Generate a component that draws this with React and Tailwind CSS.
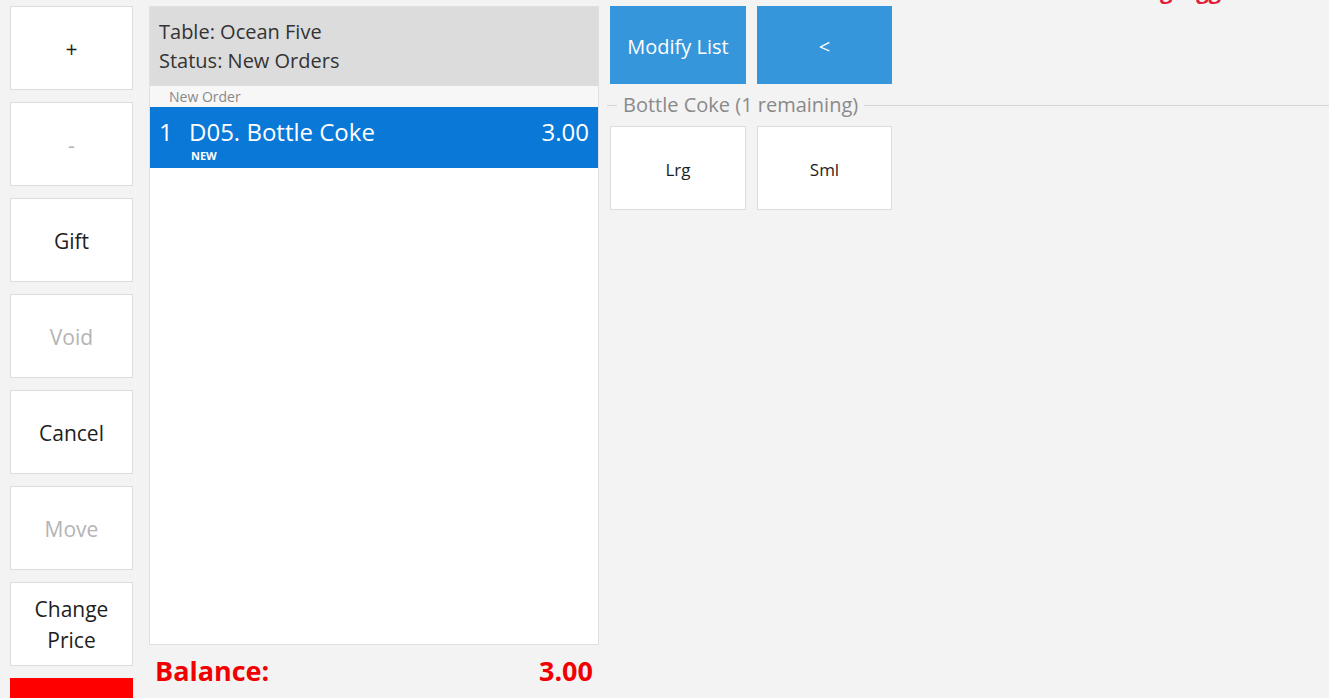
import React from "react";

// ─── Order Screen ─────────────────────────────────────────────────────────────
const sideButtons = [
  { label: "+", dim: false },
  { label: "-", dim: true },
  { label: "Gift", dim: false },
  { label: "Void", dim: true },
  { label: "Cancel", dim: false },
  { label: "Move", dim: true },
  { label: "Change Price", dim: false },
];

function SideButton({ label, dim }) {
  return (
    <button
      className={
        "h-[84px] w-[123px] shrink-0 border border-[#dcdcdc] bg-white px-2 pt-[2px] text-[21px] leading-[31px] " +
        (dim ? "text-[#b4b4b4]" : "text-[#1e1e1e]")
      }
    >
      {label}
    </button>
  );
}

export default function App() {
  return (
    <div
      className="relative h-[698px] w-[1329px] overflow-hidden bg-[#f3f3f3]"
      style={{ fontFamily: '"Open Sans", "Noto Sans", sans-serif' }}
    >
      {/* descenders of a cut-off heading */}
      <div className="absolute right-[108px] top-[-26px] text-[22px] font-bold text-[#e0203a]">
        g <span className="ml-[18px]">gg</span>
      </div>

      <div className="flex gap-4 pl-[10px] pt-[6px]">
        {/* ── Left actions ─────────────────────────────────────────── */}
        <div className="flex flex-col gap-3">
          {sideButtons.map((b) => (
            <SideButton key={b.label} {...b} />
          ))}
          <div className="h-[30px] w-[123px] bg-[#ff0000]" />
        </div>

        {/* ── Ticket ───────────────────────────────────────────────── */}
        <div className="flex w-[450px] flex-col">
          <div className="flex h-[639px] flex-col border border-[#e0e0e0] bg-white">
            <div className="h-[79px] bg-[#dcdcdc] px-[9px] pt-[10px] text-[20px] leading-[29px] text-[#333]">
              <div>Table: Ocean Five</div>
              <div>Status: New Orders</div>
            </div>
            <div className="bg-[#f7f7f7] pl-[19px] text-[14px] leading-[21px] text-[#888]">New Order</div>
            <div className="flex h-[61px] bg-[#0a78d7] px-[9px] pt-[10px] text-white">
              <div className="w-[30px] text-[24px] leading-[30px]">1</div>
              <div className="flex-1">
                <div className="text-[24px] leading-[30px]">D05. Bottle Coke</div>
                <div className="ml-[2px] pt-[2px] text-[11px] font-bold leading-[14px]">NEW</div>
              </div>
              <div className="text-[24px] leading-[30px]">3.00</div>
            </div>
          </div>
          <div className="flex items-center justify-between pl-[6px] pr-[6px] pt-[10px] text-[27px] font-bold leading-[32px] text-[#f00000]">
            <span>Balance:</span>
            <span>3.00</span>
          </div>
        </div>

        {/* ── Modifiers ────────────────────────────────────────────── */}
        <div className="flex flex-1 flex-col">
          <div className="ml-[-5px] flex gap-[11px]">
            <button className="h-[78px] w-[136px] bg-[#3596db] pt-[4px] text-[20px] text-white">Modify List</button>
            <button className="h-[78px] w-[135px] bg-[#3596db] pt-[4px] text-[20px] text-white">&lt;</button>
          </div>
          <div className="ml-[-8px] mt-[8px] flex items-center">
            <div className="h-px w-[10px] bg-[#d6d6d6]" />
            <span className="px-[6px] text-[20px] leading-[26px] text-[#8a8a8a]">Bottle Coke (1 remaining)</span>
            <div className="h-px flex-1 bg-[#d6d6d6]" />
          </div>
          <div className="ml-[-5px] mt-[8px] flex gap-[11px]">
            <button className="h-[84px] w-[136px] border border-[#dcdcdc] bg-white pt-[3px] text-[17px] text-[#1e1e1e]">Lrg</button>
            <button className="h-[84px] w-[135px] border border-[#dcdcdc] bg-white pt-[3px] text-[17px] text-[#1e1e1e]">Sml</button>
          </div>
        </div>
      </div>
    </div>
  );
}
